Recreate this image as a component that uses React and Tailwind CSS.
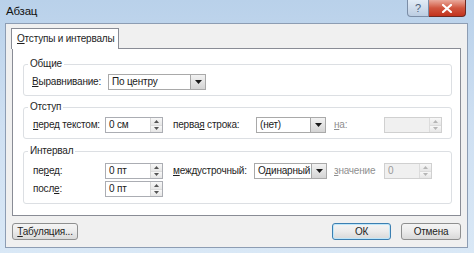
import { useState } from "react";

const font = { fontFamily: '"Liberation Sans", "Noto Sans", sans-serif' };

function Key({ children }) {
    return <span className="underline underline-offset-1">{children}</span>;
}

function DropArrow() {
    return (
        <div className="flex h-full w-[15px] shrink-0 items-center justify-center border-l border-[#a7a7a7] bg-gradient-to-b from-[#f2f2f2] to-[#d4d4d4]">
            <svg width="7" height="4" viewBox="0 0 7 4">
                <path d="M0 0H7L3.5 4Z" fill="#1a1a1a" />
            </svg>
        </div>
    );
}

function Select({ value, width }) {
    return (
        <div className={`flex h-[16px] shrink-0 items-center border border-[#a9a9a9] bg-white ${width}`}>
            <span className="flex-1 overflow-hidden whitespace-nowrap pl-[3px] text-[10px] leading-none text-[#1a1a1a]">{value}</span>
            <DropArrow />
        </div>
    );
}

function Spin({ value, width, disabled }) {
    return (
        <div className={`flex h-[16px] shrink-0 items-center border ${disabled ? "border-[#d0d0d0] bg-[#f0f0f0]" : "border-[#abadb3] bg-white"} ${width}`}>
            <span className={`flex-1 whitespace-nowrap pl-[3px] text-[10px] leading-none ${disabled ? "text-[#9a9a9a]" : "text-[#1a1a1a]"}`}>{value}</span>
            <div className={`flex h-full w-[12px] flex-col border-l ${disabled ? "border-[#dcdcdc]" : "border-[#d5d5d5]"}`}>
                <div className="flex flex-1 items-center justify-center border-b border-[#dcdcdc] bg-gradient-to-b from-[#f8f8f8] to-[#e6e6e6]">
                    <svg width="5" height="3" viewBox="0 0 5 3"><path d="M0 3H5L2.5 0Z" fill={disabled ? "#b5b5b5" : "#555"} /></svg>
                </div>
                <div className="flex flex-1 items-center justify-center bg-gradient-to-b from-[#f8f8f8] to-[#e6e6e6]">
                    <svg width="5" height="3" viewBox="0 0 5 3"><path d="M0 0H5L2.5 3Z" fill={disabled ? "#b5b5b5" : "#555"} /></svg>
                </div>
            </div>
        </div>
    );
}

function Group({ legend, height, children }) {
    return (
        <div className={`relative ml-[10px] mr-[8px] rounded-[3px] border border-[#dcdfe3] shadow-[inset_1px_1px_0_#fff] ${height}`}>
            <span className="absolute -top-[8px] left-[4px] whitespace-nowrap bg-white px-[2px] text-[10px] leading-[14px] text-[#1e1e1e]">{legend}</span>
            {children}
        </div>
    );
}

function Label({ children, width, disabled }) {
    return (
        <span className={`shrink-0 whitespace-nowrap text-[10px] leading-none ${disabled ? "text-[#8f8f8f]" : "text-[#1e1e1e]"} ${width}`}>{children}</span>
    );
}

function Button({ children, width, focused }) {
    return (
        <button
            className={`flex h-[17px] items-center justify-center whitespace-nowrap rounded-[3px] border bg-gradient-to-b from-[#f4f4f4] via-[#ebebeb] to-[#d9d9d9] text-[10px] leading-none text-[#1e1e1e] ${focused ? "border-[#3c7fb1] shadow-[inset_0_0_0_1px_#bde6fa]" : "border-[#8e8f8f]"} ${width}`}
        >
            {children}
        </button>
    );
}

export default function App() {
    const [tab] = useState("indents");

    return (
        <div style={font} className="flex h-[253px] w-[474px] flex-col bg-gradient-to-b from-[#b9d1ea] via-[#cfe0f2] to-[#d9e8f6] tracking-[-0.2px]">
            <div className="flex h-[23px] items-start">
                <span className="pl-[6px] pt-[6px] text-[11.5px] leading-none text-[#111]">Абзац</span>
                <div className="ml-auto mr-[8px] flex h-[17px]">
                    <div className="flex w-[22px] items-center justify-center rounded-bl-[4px] border border-t-0 border-[#7b8da6] bg-gradient-to-b from-[#e3ecf6] to-[#bccde2] text-[11px] text-[#4a5d78]">?</div>
                    <div className="flex w-[37px] items-center justify-center rounded-br-[4px] border border-l-0 border-t-0 border-[#6e2a22] bg-gradient-to-b from-[#e9a99c] via-[#d0553f] to-[#c2321c]">
                        <svg width="10" height="9" viewBox="0 0 10 9">
                            <path d="M1 1L9 8M9 1L1 8" stroke="#fff" strokeWidth="2.2" strokeLinecap="square" />
                        </svg>
                    </div>
                </div>
            </div>

            <div className="ml-[5px] mr-[6px] flex h-[225px] flex-col border border-[#8d9db3] bg-[#f0f0f0]">
                <div className="ml-[5px] mt-[4px] flex">
                    <div className="z-10 -mb-px flex h-[21px] w-[108px] items-center whitespace-nowrap border border-b-0 border-[#898c95] bg-white pl-[5px] text-[10px] leading-none text-[#1e1e1e]">
                        {tab === "indents" && <span><Key>О</Key>тступы и интервалы</span>}
                    </div>
                </div>
                <div className="ml-[6px] mr-[6px] flex h-[168px] flex-col border border-[#898c95] bg-white pt-[15px]">
                    <Group legend="Общие" height="h-[32px]">
                        <div className="flex h-full items-center pl-[8px] pt-[3px]">
                            <Label width="w-[76px]"><Key>В</Key>ыравнивание:</Label>
                            <Select value="По центру" width="w-[98px]" />
                        </div>
                    </Group>

                    <div className="h-[11px]" />
                    <Group legend="Отступ" height="h-[32px]">
                        <div className="flex h-full items-center pl-[9px] pt-[4px]">
                            <Label width="w-[72px]"><Key>п</Key>еред текстом:</Label>
                            <Spin value="0 см" width="w-[58px]" />
                            <Label width="w-[93px] pl-[10px]">перва<Key>я</Key> строка:</Label>
                            <Select value="(нет)" width="w-[70px]" />
                            <Label width="w-[58px] pl-[8px]" disabled><Key>н</Key>а:</Label>
                            <Spin value="" width="w-[58px]" disabled />
                        </div>
                    </Group>

                    <div className="h-[12px]" />
                    <Group legend="Интервал" height="h-[53px]">
                        <div className="flex flex-col gap-[2px] pl-[9px] pt-[11px]">
                            <div className="flex h-[16px] items-center">
                                <Label width="w-[72px]">пе<Key>р</Key>ед:</Label>
                                <Spin value="0 пт" width="w-[58px]" />
                                <Label width="w-[91px] pl-[10px]"><Key>м</Key>еждустрочный:</Label>
                                <Select value="Одинарный" width="w-[73px]" />
                                <Label width="w-[57px] pl-[7px]" disabled><Key>з</Key>начение</Label>
                                <Spin value="0" width="w-[48px]" disabled />
                            </div>
                            <div className="flex h-[16px] items-center">
                                <Label width="w-[72px]">посл<Key>е</Key>:</Label>
                                <Spin value="0 пт" width="w-[58px]" />
                            </div>
                        </div>
                    </Group>
                </div>

                <div className="mt-[7px] flex px-[6px]">
                    <Button width="w-[66px]"><span><Key>Т</Key>абуляция...</span></Button>
                    <div className="ml-auto flex gap-[10px]">
                        <Button width="w-[59px]" focused>ОК</Button>
                        <Button width="w-[60px]">Отмена</Button>
                    </div>
                </div>
            </div>
        </div>
    );
}
